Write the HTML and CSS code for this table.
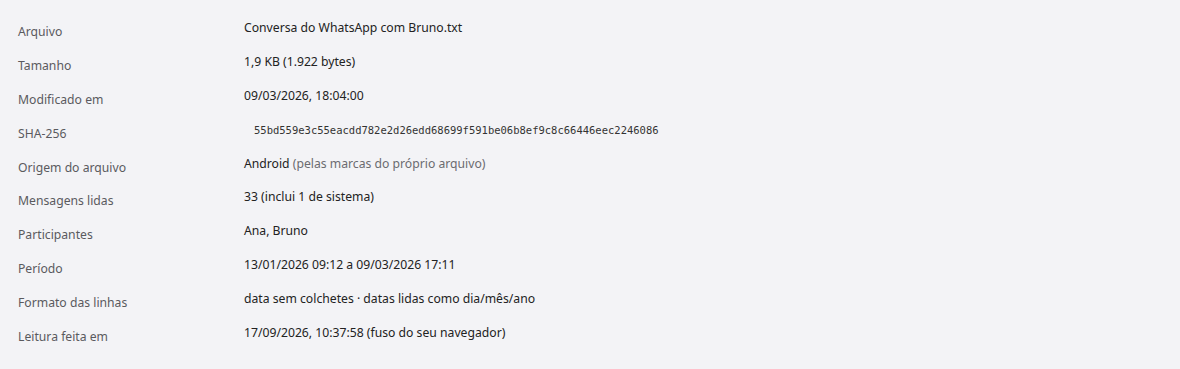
FILE: index.html
```html
<!DOCTYPE html>
<html lang="pt-BR">
<head>
    <meta charset="UTF-8">
    <title>Detalhes do arquivo</title>
    <link rel="stylesheet" href="styles.css">
</head>
<body>
    <dl class="file-info">
        <div class="info-row">
            <dt>Arquivo</dt>
            <dd>Conversa do WhatsApp com Bruno.txt</dd>
        </div>
        <div class="info-row">
            <dt>Tamanho</dt>
            <dd>1,9 KB (1.922 bytes)</dd>
        </div>
        <div class="info-row">
            <dt>Modificado em</dt>
            <dd>09/03/2026, 18:04:00</dd>
        </div>
        <div class="info-row">
            <dt>SHA-256</dt>
            <dd><code class="hash">55bd559e3c55eacdd782e2d26edd68699f591be06b8ef9c8c66446eec2246086</code></dd>
        </div>
        <div class="info-row">
            <dt>Origem do arquivo</dt>
            <dd>Android <span class="note">(pelas marcas do próprio arquivo)</span></dd>
        </div>
        <div class="info-row">
            <dt>Mensagens lidas</dt>
            <dd>33 (inclui 1 de sistema)</dd>
        </div>
        <div class="info-row">
            <dt>Participantes</dt>
            <dd>Ana, Bruno</dd>
        </div>
        <div class="info-row">
            <dt>Período</dt>
            <dd>13/01/2026 09:12 a 09/03/2026 17:11</dd>
        </div>
        <div class="info-row">
            <dt>Formato das linhas</dt>
            <dd>data sem colchetes · datas lidas como dia/mês/ano</dd>
        </div>
        <div class="info-row">
            <dt>Leitura feita em</dt>
            <dd>17/09/2026, 10:37:58 (fuso do seu navegador)</dd>
        </div>
    </dl>
</body>
</html>
```

FILE: styles.css
```css
body {
    margin: 0;
    background: #f3f3f6;
    font-family: "Noto Sans", "Open Sans", sans-serif;
    font-size: 12.2px;
    color: #222;
}
.file-info {
    margin: 0;
    padding: 13px 18px 0;
}
.info-row {
    display: grid;
    grid-template-columns: 226px 1fr;
    padding: 6px 0 5.9px;
}
.info-row dt {
    padding-top: 4px;
    line-height: 18px;
    color: #5a5a5e;
}
.info-row dd {
    margin: 0;
    line-height: 18px;
}
.hash {
    display: inline-block;
    padding-left: 10px;
    font-family: "DejaVu Sans Mono", monospace;
    font-size: 10.5px;
    color: #333;
}
.note {
    color: #6b6b70;
}
```
